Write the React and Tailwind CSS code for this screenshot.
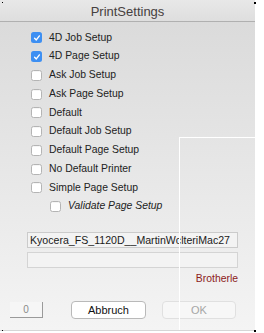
import React from "react";

const rows = [
  { label: "4D Job Setup", checked: true },
  { label: "4D Page Setup", checked: true },
  { label: "Ask Job Setup" },
  { label: "Ask Page Setup" },
  { label: "Default" },
  { label: "Default Job Setup" },
  { label: "Default Page Setup" },
  { label: "No Default Printer" },
  { label: "Simple Page Setup" },
  { label: "Validate Page Setup", indent: true, italic: true },
];

function Box({ checked }) {
  if (checked) {
    return (
      <div className="w-[11px] h-[11px] rounded-[2.5px] bg-[#3d8ff2] flex items-center justify-center shrink-0">
        <svg width="8" height="8" viewBox="0 0 8 8">
          <path d="M1.6 4.2 L3.3 5.9 L6.4 1.9" fill="none" stroke="white" strokeWidth="1.4" strokeLinecap="round" strokeLinejoin="round" />
        </svg>
      </div>
    );
  }
  return (
    <div className="w-[11px] h-[11px] rounded-[2.5px] bg-white border border-[#b4b4b4] shadow-[inset_0_1px_0_rgba(0,0,0,0.04)] shrink-0" />
  );
}

export default function App() {
  return (
    <div className="relative w-[264px] h-[333px] bg-white overflow-hidden" style={{ fontFamily: "'Liberation Sans', Arial, sans-serif" }}>
      <div className="relative w-[255px] h-[331px] flex flex-col bg-gradient-to-b from-[#d9d9d9] to-[#f4f4f4] border-b border-[#d6d6d6]">
        <div className="h-[22px] shrink-0 flex items-center justify-center bg-gradient-to-b from-[#e8e8e8] to-[#dedede] border-b border-[#b0b0b0]">
          <span className="text-[13px] text-[#464040] leading-none pt-[1px]">PrintSettings</span>
        </div>
        <div className="flex flex-col pt-[6.5px]">
          {rows.map((r) => (
            <div key={r.label} className={`h-[18.75px] flex items-center ${r.indent ? "pl-[50px]" : "pl-[31px]"}`}>
              <Box checked={r.checked} />
              <span className={`text-[10.4px] text-[#222] leading-none ${r.indent ? "ml-[7px] italic" : "ml-[7px]"}`}>{r.label}</span>
            </div>
          ))}
        </div>
        <div className="mt-[16px] ml-[27px] w-[211px] h-[16px] bg-[#f3f3f3] border border-[#cbcbcb] flex items-center pl-[2px]">
          <span className="text-[10.6px] text-[#1a1a1a] leading-none whitespace-nowrap">Kyocera_FS_1120D__MartinWclteriMac27</span>
        </div>
        <div className="mt-[4px] ml-[27px] w-[211px] h-[16px] bg-[#f3f3f3] border border-[#d4d4d4]" />
        <div className="mt-[5px] ml-[27px] w-[211px] flex justify-end">
          <span className="text-[10.4px] text-[#8c2020] leading-[12px]">Brotherle</span>
        </div>
        <div className="mt-[16px] flex items-center">
          <div className="ml-[10px] w-[33px] h-[16px] bg-[#f6f6f6] border-r border-b border-[#9a9a9a] flex items-center justify-center">
            <span className="text-[10px] text-[#8a8a8a] leading-none">0</span>
          </div>
          <button className="ml-[28px] w-[75px] h-[18px] rounded-[4px] bg-white border border-[#b9b9b9] flex items-center justify-center">
            <span className="text-[11px] text-[#111] leading-none">Abbruch</span>
          </button>
          <button className="ml-[16px] w-[74px] h-[18px] rounded-[4px] bg-[#f7f7f7] border border-[#e0e0e0] flex items-center justify-center">
            <span className="text-[11px] text-[#a6a6a6] leading-none">OK</span>
          </button>
        </div>
        <div className="absolute left-[179px] top-[137px] w-[76px] h-[193px] border-l border-t border-white pointer-events-none" />
      </div>
      <div className="absolute left-[2px] top-[2px] w-[1px] h-[1px] bg-black" />
      <div className="absolute left-[254px] top-[2px] w-[2px] h-[2px] bg-black" />
      <div className="absolute left-[2px] top-[330px] w-[1px] h-[1px] bg-black" />
      <div className="absolute left-[254px] top-[330px] w-[2px] h-[2px] bg-black" />
    </div>
  );
}
